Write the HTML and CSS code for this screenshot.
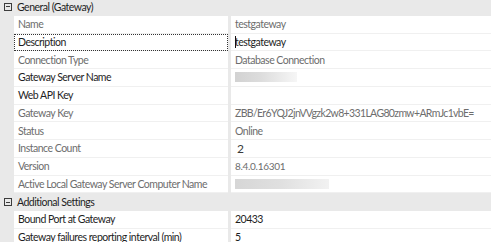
FILE: index.html
```html
<!DOCTYPE html>
<html lang="en">
<head>
    <meta charset="UTF-8">
    <title>Gateway Properties</title>
    <link rel="stylesheet" href="styles.css">
</head>
<body>
    <div class="sheet">
        <div class="category">
            <span class="toggle"></span>
            <span class="category-title">General (Gateway)</span>
        </div>
        <div class="prop readonly">
            <span class="prop-name">Name</span>
            <span class="prop-value">testgateway</span>
        </div>
        <div class="prop selected">
            <span class="prop-name">Description</span>
            <span class="prop-value"><span class="caret"></span>testgateway</span>
        </div>
        <div class="prop readonly">
            <span class="prop-name">Connection Type</span>
            <span class="prop-value">Database Connection</span>
        </div>
        <div class="prop">
            <span class="prop-name">Gateway Server Name</span>
            <span class="prop-value"><span class="redacted short"></span></span>
        </div>
        <div class="prop">
            <span class="prop-name">Web API Key</span>
            <span class="prop-value"></span>
        </div>
        <div class="prop readonly">
            <span class="prop-name">Gateway Key</span>
            <span class="prop-value key">ZBB/Er6YQJ2jnVVgzk2w8+331LAG80zmw+ARmJc1vbE=</span>
        </div>
        <div class="prop readonly">
            <span class="prop-name">Status</span>
            <span class="prop-value">Online</span>
        </div>
        <div class="prop readonly">
            <span class="prop-name">Instance Count</span>
            <span class="prop-value count">2</span>
        </div>
        <div class="prop readonly">
            <span class="prop-name">Version</span>
            <span class="prop-value small">8.4.0.16301</span>
        </div>
        <div class="prop readonly">
            <span class="prop-name">Active Local Gateway Server Computer Name</span>
            <span class="prop-value"><span class="redacted long"></span></span>
        </div>

        <div class="category">
            <span class="toggle"></span>
            <span class="category-title">Additional Settings</span>
        </div>
        <div class="prop">
            <span class="prop-name">Bound Port at Gateway</span>
            <span class="prop-value">20433</span>
        </div>
        <div class="prop">
            <span class="prop-name">Gateway failures reporting interval (min)</span>
            <span class="prop-value">5</span>
        </div>
    </div>
</body>
</html>
```

FILE: styles.css
```css
* {
    margin: 0;
    padding: 0;
    box-sizing: border-box;
}

body {
    font-family: 'Lato', 'Open Sans', sans-serif;
    font-size: 10.5px;
    letter-spacing: -0.5px;
    background: #e9e9e9;
    color: #1e1e1e;
    overflow: hidden;
}

.sheet {
    margin-top: -2px;
    display: flex;
    flex-direction: column;
}

.category {
    height: 17.75px;
    display: flex;
    align-items: center;
    background: #e9e9e9;
    color: #1e1e1e;
}

/* collapse box: square with a minus */
.toggle {
    width: 8px;
    height: 8px;
    margin: 0 5px 0 4px;
    border: 1px solid #3c3c3c;
    position: relative;
}

.toggle::after {
    content: "";
    position: absolute;
    left: 1px;
    right: 1px;
    top: 2.5px;
    height: 1px;
    background: #3c3c3c;
}

.prop {
    height: 17.75px;
    display: grid;
    grid-template-columns: 214px 1fr;
    column-gap: 3px;
    margin-left: 14px;
}

.prop-name,
.prop-value {
    background: #fff;
    border-bottom: 1px solid #f0f0f0;
    display: flex;
    align-items: center;
    white-space: nowrap;
    overflow: hidden;
}

.prop-name {
    padding-left: 4px;
}

.prop-value {
    padding-left: 4px;
}

.readonly .prop-name,
.readonly .prop-value {
    color: #6d6d6d;
}

.readonly .count {
    color: #3a3a3a;
    font-size: 12px;
    padding-left: 6px;
}

.key {
    letter-spacing: -0.65px;
}

.small {
    font-size: 10px;
    letter-spacing: -0.3px;
}

.selected .prop-name {
    outline: 1px dotted #333;
    outline-offset: -1px;
}

.caret {
    width: 1px;
    height: 12px;
    background: #111;
    margin-right: -1px;
}

.redacted {
    height: 10px;
    background: linear-gradient(90deg, #d2d2d2 0%, #dcdcdc 40%, #f6f6f6 100%);
}

.redacted.short {
    width: 62px;
}

.redacted.long {
    width: 94px;
    background: linear-gradient(90deg, #d6d6d6 0%, #e0e0e0 50%, #f2f2f2 100%);
}
```
